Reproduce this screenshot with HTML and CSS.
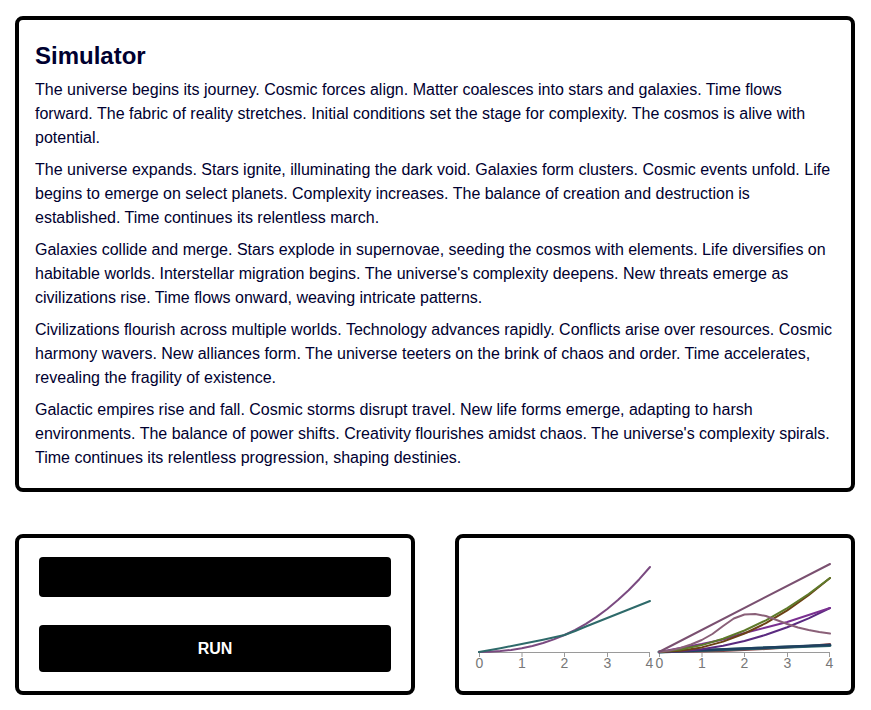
FILE: index.html
```html
<!DOCTYPE html>
<html lang="en">
<head>
<meta charset="utf-8">
<title>Simulator</title>
<link rel="stylesheet" href="styles.css">
</head>
<body>
<div class="page">
  <section class="panel story">
    <h1 class="title">Simulator</h1>
    <p>The universe begins its journey. Cosmic forces align. Matter coalesces into stars and galaxies. Time flows forward. The fabric of reality stretches. Initial conditions set the stage for complexity. The cosmos is alive with potential.</p>
    <p>The universe expands. Stars ignite, illuminating the dark void. Galaxies form clusters. Cosmic events unfold. Life begins to emerge on select planets. Complexity increases. The balance of creation and destruction is established. Time continues its relentless march.</p>
    <p>Galaxies collide and merge. Stars explode in supernovae, seeding the cosmos with elements. Life diversifies on habitable worlds. Interstellar migration begins. The universe's complexity deepens. New threats emerge as civilizations rise. Time flows onward, weaving intricate patterns.</p>
    <p>Civilizations flourish across multiple worlds. Technology advances rapidly. Conflicts arise over resources. Cosmic harmony wavers. New alliances form. The universe teeters on the brink of chaos and order. Time accelerates, revealing the fragility of existence.</p>
    <p>Galactic empires rise and fall. Cosmic storms disrupt travel. New life forms emerge, adapting to harsh environments. The balance of power shifts. Creativity flourishes amidst chaos. The universe's complexity spirals. Time continues its relentless progression, shaping destinies.</p>
  </section>
  <div class="bottom">
    <section class="panel controls">
      <div class="display"></div>
      <button class="run" type="button">RUN</button>
    </section>
    <section class="panel charts">
      <svg class="chart" width="352" height="113" viewBox="0 0 352 113">
        <g class="axis">
          <line x1="0" y1="94.5" x2="171" y2="94.5"/>
          <line x1="0.5" y1="94" x2="0.5" y2="99"/>
          <line x1="43" y1="94" x2="43" y2="99"/>
          <line x1="85.5" y1="94" x2="85.5" y2="99"/>
          <line x1="128.5" y1="94" x2="128.5" y2="99"/>
          <line x1="170.5" y1="94" x2="170.5" y2="99"/>
          <line x1="180" y1="94.5" x2="351" y2="94.5"/>
          <line x1="180.5" y1="94" x2="180.5" y2="99"/>
          <line x1="223" y1="94" x2="223" y2="99"/>
          <line x1="265.5" y1="94" x2="265.5" y2="99"/>
          <line x1="308.5" y1="94" x2="308.5" y2="99"/>
          <line x1="350.5" y1="94" x2="350.5" y2="99"/>
        </g>
        <g class="ticks">
          <text x="0.5" y="110">0</text>
          <text x="43" y="110">1</text>
          <text x="85.5" y="110">2</text>
          <text x="128.5" y="110">3</text>
          <text x="170.5" y="110">4</text>
          <text x="180.5" y="110">0</text>
          <text x="223" y="110">1</text>
          <text x="265.5" y="110">2</text>
          <text x="308.5" y="110">3</text>
          <text x="350.5" y="110">4</text>
        </g>
        <g class="series">
          <polyline class="s-purple-l" points="0,94 10.7,93.8 21.4,93.1 32.1,92 42.75,90.3 53.4,88 64.1,85 74.8,81.4 85.5,77 96.2,71.8 106.9,65.8 117.6,58.9 128.25,51 138.9,42.1 149.6,32.2 160.3,21.2 171,9"/>
          <polyline class="s-teal" points="0,94 21.4,90.2 42.75,86 64.1,81.7 85.5,77 96.2,73 106.9,68.5 128.25,60 149.6,51.5 171,43"/>

          <polyline class="s-red" points="180,94 201.4,94 222.75,93.6 244.1,93 265.5,92 286.9,91 308.25,89.5 329.6,88 351,86"/>
          <polyline class="s-teal2" points="180,94 351,87.5"/>
          <polyline class="s-navy" points="180,94 351,87"/>
          <polyline class="s-purple2" points="180,94 201.4,93.3 222.75,91.25 244.1,87.8 265.5,83 286.9,76.8 308.25,69.25 329.6,60.3 351,50"/>
          <polyline class="s-purple1" points="180,94 201.4,90 222.75,86 244.1,81.5 265.5,75 286.9,69.5 308.25,64 329.6,57 351,50"/>
          <polyline class="s-brown" points="180,94 201.4,92.8 222.75,89.4 244.1,83.6 265.5,75.5 286.9,65.1 308.25,52.4 329.6,37.3 351,20"/>
          <polyline class="s-olive" points="180,94 201.4,91.5 222.75,87.1 244.1,80.8 265.5,72.5 286.9,62.3 308.25,50.1 329.6,36 351,20"/>
          <polyline class="s-hump" points="180,94 190.7,92.5 201.4,90 212,86.5 222.75,82 233.4,76 244.1,68 254.8,60.5 265.5,56.5 276.2,56 286.9,58 297.6,62 308.25,66 319,69.5 329.6,72 340.3,74 351,75.5"/>
          <polyline class="s-mauve" points="180,94 351,6"/>
        </g>
      </svg>
    </section>
  </div>
</div>
</body>
</html>
```

FILE: styles.css
```css
html, body {
  margin: 0;
  padding: 0;
  background: #ffffff;
}

body {
  font-family: "Liberation Sans", Arial, sans-serif;
  color: #000030;
}

.page {
  padding: 16px 16px 15px 15px;
}

.panel {
  border: 4px solid #000000;
  border-radius: 8px;
  background: #ffffff;
}

.story {
  padding: 22px 16px 18px 16px;
}

.title {
  margin: 0 0 8px 0;
  font-size: 24px;
  font-weight: bold;
  line-height: normal;
  color: #000030;
}

.story p {
  margin: 0 0 8px 0;
  font-size: 16px;
  line-height: 24px;
}

.story p:last-child {
  margin-bottom: 0;
}

.bottom {
  margin-top: 42px;
  display: grid;
  grid-template-columns: 1fr 1fr;
  column-gap: 40px;
}

.controls {
  padding: 19px 20px;
  display: flex;
  flex-direction: column;
  gap: 28px;
}

.display {
  height: 40px;
  background: #000000;
  border-radius: 4px;
}

.run {
  height: 47px;
  border: none;
  border-radius: 4px;
  background: #000000;
  color: #ffffff;
  font-family: "Liberation Sans", Arial, sans-serif;
  font-size: 16px;
  font-weight: bold;
  padding: 0;
  cursor: pointer;
}

.charts {
  padding: 20px 20px 0 20px;
}

.chart {
  display: block;
  overflow: visible;
}

.axis line {
  stroke: #9a9a9a;
  stroke-width: 1;
}

.ticks text {
  font-family: "Liberation Sans", Arial, sans-serif;
  font-size: 14px;
  fill: #777777;
  text-anchor: middle;
}

.series polyline {
  fill: none;
  stroke-width: 2;
  stroke-linejoin: round;
  stroke-linecap: round;
}

.s-purple-l { stroke: #7a4a80; }
.s-teal { stroke: #2e6a6a; }
.s-red { stroke: #8a4a4a; }
.s-teal2 { stroke: #2e6a6a; stroke-width: 3 !important; }
.s-navy { stroke: #1f4060; stroke-width: 2.5 !important; }
.s-purple2 { stroke: #5a2a80; }
.s-purple1 { stroke: #7a3090; }
.s-brown { stroke: #6b4014; }
.s-olive { stroke: #5e7a2a; }
.s-hump { stroke: #8a6078; }
.s-mauve { stroke: #7a5070; }
```
